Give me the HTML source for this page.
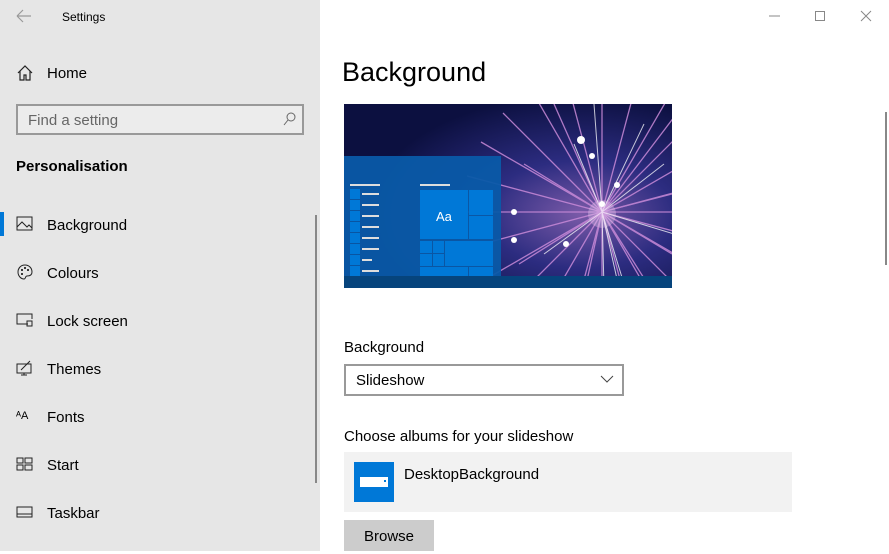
<!DOCTYPE html>
<html><head><meta charset="utf-8"><style>
*{margin:0;padding:0;box-sizing:border-box}
body{width:889px;height:551px;overflow:hidden;background:#fff;font-family:"Liberation Sans",sans-serif;color:#000;position:relative}
.side{position:absolute;left:0;top:0;width:320px;height:551px;background:#e6e6e6}
.abs{position:absolute}
.nav{position:absolute;left:47px;font-size:15px;color:#000}
.ic{position:absolute;left:16px}
</style></head><body>
<div class="side">
  <svg class="abs" style="left:15px;top:8px" width="18" height="16"><path d="M2 8H16M2 8L8 2M2 8L8 14" stroke="#999" stroke-width="1.2" fill="none"/></svg>
  <div class="abs" style="left:62px;top:10px;font-size:12px">Settings</div>
  <svg class="ic" style="top:64px" width="18" height="18"><path d="M2 9L9 2L16 9M4 7V16H8V11H10V16H14V7" stroke="#222" stroke-width="1.2" fill="none"/></svg>
  <div class="nav" style="top:65px">Home</div>
  <div class="abs" style="left:16px;top:104px;width:288px;height:31px;border:2px solid #999;background:#ececec"></div>
  <div class="abs" style="left:28px;top:112px;font-size:15px;color:#666">Find a setting</div>
  <svg class="abs" style="left:282px;top:111px" width="14" height="16"><circle cx="9" cy="6" r="4" stroke="#666" fill="none"/><path d="M6 9L2 14" stroke="#666"/></svg>
  <div class="abs" style="left:16px;top:158px;font-size:15px;font-weight:bold">Personalisation</div>
  <div class="abs" style="left:0;top:212px;width:4px;height:24px;background:#0078d7"></div>
  <svg class="ic" style="top:216px" width="18" height="16"><rect x="1" y="1" width="15" height="13" stroke="#222" fill="none"/><path d="M1 11L6 6L11 11L13 9L16 12" stroke="#222" fill="none"/></svg>
  <div class="nav" style="top:217px">Background</div>
  <svg class="ic" style="top:263px" width="18" height="18"><path d="M9 2C4 2 2 6 2 9C2 13 5 16 8 16C10 16 9 13 11 13C14 13 16 12 16 9C16 5 13 2 9 2Z" stroke="#222" fill="none"/><circle cx="6" cy="7" r="1"/><circle cx="9" cy="5" r="1"/><circle cx="12" cy="7" r="1"/><circle cx="6" cy="11" r="1"/></svg>
  <div class="nav" style="top:265px">Colours</div>
  <svg class="ic" style="top:312px" width="18" height="16"><path d="M12 12H1V2H16V7" stroke="#222" fill="none"/><rect x="11" y="9" width="5" height="5" stroke="#222" fill="none"/></svg>
  <div class="nav" style="top:313px">Lock screen</div>
  <svg class="ic" style="top:360px" width="18" height="16"><rect x="1" y="4" width="14" height="9" stroke="#222" fill="none"/><path d="M5 15H11M8 13V15M5 10L14 1" stroke="#222" fill="none"/></svg>
  <div class="nav" style="top:361px">Themes</div>
  <div class="abs" style="left:16px;top:410px;font-size:11px">ᴬA</div>
  <div class="nav" style="top:409px">Fonts</div>
  <svg class="ic" style="top:456px" width="18" height="16"><rect x="1" y="2" width="6" height="5" stroke="#222" fill="none"/><rect x="9" y="2" width="7" height="5" stroke="#222" fill="none"/><rect x="1" y="9" width="6" height="5" stroke="#222" fill="none"/><rect x="9" y="9" width="7" height="5" stroke="#222" fill="none"/></svg>
  <div class="nav" style="top:457px">Start</div>
  <svg class="ic" style="top:504px" width="18" height="16"><rect x="1" y="3" width="15" height="10" stroke="#222" fill="none"/><path d="M1 10H16" stroke="#222"/></svg>
  <div class="nav" style="top:505px">Taskbar</div>
  <div class="abs" style="left:315px;top:215px;width:2px;height:268px;background:#888"></div>
</div>
<svg class="abs" style="left:760px;top:8px" width="120" height="16"><path d="M9 8H20" stroke="#888"/><rect x="55.5" y="3.5" width="9" height="9" stroke="#888" fill="none"/><path d="M101 3L111 13M111 3L101 13" stroke="#888"/></svg>
<div class="abs" style="left:885px;top:112px;width:2px;height:153px;background:#888"></div>
<div class="abs" style="left:342px;top:57px;font-size:27px">Background</div>
<svg class="abs" style="left:344px;top:104px" width="328" height="184">
<defs><radialGradient id="g" cx="0.72" cy="0.6" r="0.65"><stop offset="0" stop-color="#7a5aa8"/><stop offset="0.45" stop-color="#2c2c80"/><stop offset="1" stop-color="#0c1040"/></radialGradient></defs>
<rect width="328" height="184" fill="url(#g)"/>
<g stroke="#c98ad8" stroke-width="1.3" opacity="0.85">
<path d="M258 108L398 108M258 108L393 144M258 108L379 178M258 108L357 207M258 108L328 229M258 108L294 243M258 108L258 248M258 108L222 243M258 108L188 229M258 108L159 207M258 108L137 178M258 108L123 144M258 108L118 108M258 108L123 72M258 108L137 38M258 108L159 9M258 108L188 -13M258 108L222 -27M258 108L258 -32M258 108L294 -27M258 108L328 -13M258 108L357 9M258 108L379 38M258 108L393 72"/>
<path d="M258 108L340 0M258 108L210 0M258 108L328 90M258 108L310 190M258 108L180 60M258 108L240 190M258 108L328 150M258 108L175 160"/>
</g>
<g stroke="#fff" stroke-width="1" opacity="0.75"><path d="M258 108L320 60M258 108L330 130M258 108L280 180M258 108L200 150M258 108L230 40M258 108L260 184M258 108L300 20M258 108L250 0M258 108L275 184"/></g>
<circle cx="258" cy="110" r="14" fill="#e8c8f0" opacity="0.35"/>
<g fill="#fff"><circle cx="237" cy="36" r="4"/><circle cx="248" cy="52" r="3"/><circle cx="273" cy="81" r="3"/><circle cx="258" cy="100" r="3"/><circle cx="170" cy="108" r="3"/><circle cx="222" cy="140" r="3"/><circle cx="170" cy="136" r="3"/></g>
<rect x="0" y="52" width="157" height="120" fill="#0a5aa8" opacity="0.95"/>
<rect x="0" y="172" width="328" height="12" fill="#06447c"/>
<g fill="#ddd"><rect x="6" y="80" width="30" height="2"/><rect x="76" y="80" width="30" height="2"/></g>
<g fill="#0078d7"><rect x="6" y="85" width="10" height="10"/><rect x="6" y="96" width="10" height="10"/><rect x="6" y="107" width="10" height="10"/><rect x="6" y="118" width="10" height="10"/><rect x="6" y="129" width="10" height="10"/><rect x="6" y="140" width="10" height="10"/><rect x="6" y="151" width="10" height="10"/><rect x="6" y="162" width="10" height="10"/>
<rect x="76" y="86" width="48" height="49"/><rect x="125" y="86" width="24" height="25"/><rect x="125" y="112" width="24" height="23"/><rect x="76" y="137" width="12" height="12"/><rect x="89" y="137" width="11" height="12"/><rect x="76" y="150" width="12" height="12"/><rect x="89" y="150" width="11" height="12"/><rect x="101" y="137" width="48" height="25"/><rect x="76" y="163" width="48" height="9"/><rect x="125" y="163" width="24" height="9"/></g>
<g fill="#ddd"><rect x="18" y="89" width="17" height="2"/><rect x="18" y="100" width="17" height="2"/><rect x="18" y="111" width="17" height="2"/><rect x="18" y="122" width="17" height="2"/><rect x="18" y="133" width="17" height="2"/><rect x="18" y="144" width="17" height="2"/><rect x="18" y="155" width="10" height="2"/><rect x="18" y="166" width="17" height="2"/></g>
<text x="92" y="117" fill="#fff" font-family="Liberation Sans" font-size="13">Aa</text>
</svg>
<div class="abs" style="left:344px;top:339px;font-size:15px">Background</div>
<div class="abs" style="left:344px;top:364px;width:280px;height:32px;border:2px solid #999"></div>
<div class="abs" style="left:356px;top:372px;font-size:15px">Slideshow</div>
<svg class="abs" style="left:600px;top:374px" width="14" height="10"><path d="M1 2L7 8L13 2" stroke="#444" fill="none"/></svg>
<div class="abs" style="left:344px;top:428px;font-size:15px">Choose albums for your slideshow</div>
<div class="abs" style="left:344px;top:452px;width:448px;height:60px;background:#f2f2f2"></div>
<div class="abs" style="left:354px;top:462px;width:40px;height:40px;background:#0078d7"></div>
<div class="abs" style="left:360px;top:477px;width:28px;height:10px;background:#fff"></div>
<div class="abs" style="left:384px;top:480px;width:2px;height:2px;background:#0078d7"></div>
<div class="abs" style="left:404px;top:466px;font-size:15px">DesktopBackground</div>
<div class="abs" style="left:344px;top:520px;width:90px;height:31px;background:#ccc;font-size:15px;text-align:center;line-height:34px">Browse</div>
</body></html>
